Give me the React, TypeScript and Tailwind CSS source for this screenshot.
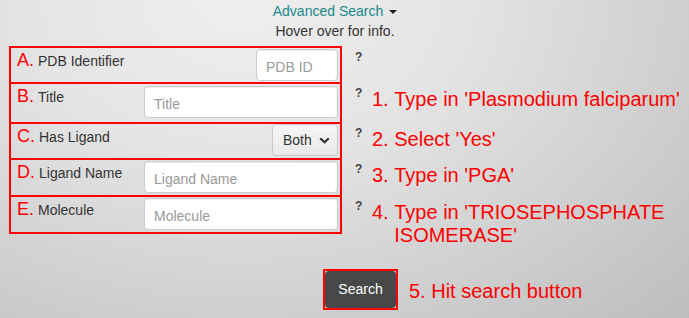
import React from "react";

const font = { fontFamily: '"Liberation Sans", Arial, Helvetica, sans-serif' };

function TextInput({ placeholder, w, mt }: { placeholder: string; w: string; mt: string }) {
  return (
    <input
      readOnly
      placeholder={placeholder}
      className={`${w} ${mt} h-[32px] shrink-0 rounded-[4px] border border-[#cccccc] bg-white pl-[9px] pr-[6px] pt-[4px] text-[14px] text-[#333] outline-none shadow-[inset_0_1px_1px_rgba(0,0,0,0.075)] placeholder:text-[#999999]`}
      style={font}
    />
  );
}

function Row({
  letter,
  label,
  h,
  last,
  control,
  help,
}: {
  letter: string;
  label: string;
  h: string;
  last?: boolean;
  control: React.ReactNode;
  help?: React.ReactNode;
}) {
  return (
    <div className={`flex ${h}`}>
      <div
        className={`flex w-[333px] shrink-0 justify-between border-x-2 border-t-2 border-[#ff0000] pl-[6px] pr-[2px] ${last ? "border-b-2" : ""}`}
      >
        <div className="pt-[1px] leading-[22px] whitespace-nowrap">
          <span className="text-[18px] text-[#ff0000]">{letter}</span>
          <span className="ml-[4px] text-[14px] text-[#333333]">{label}</span>
        </div>
        {control}
      </div>
      <div className="ml-[13px] flex flex-1 items-start">
        <span className="w-[17px] shrink-0 pt-[4px] text-[12px] font-bold leading-[14px] text-[#444444]">?</span>
        {help}
      </div>
    </div>
  );
}

function Help({ num, text }: { num: string; text: string }) {
  return (
    <div className="flex pt-[6px] text-[20px] leading-[23px] text-[#ff0000]">
      <span className="shrink-0 whitespace-pre">{num + " "}</span>
      <span>{text}</span>
    </div>
  );
}

export default function App() {
  return (
    <div
      className="h-[318px] w-[689px] overflow-hidden bg-[radial-gradient(ellipse_at_35%_0%,#efefef_0%,#e4e4e4_35%,#bdbdbd_100%)]"
      style={font}
    >
      <div className="w-[670px] pt-[1px] text-center text-[14px] leading-[20px]">
        <div className="text-[#1a8a8a]">
          Advanced Search
          <span className="ml-[6px] inline-block h-0 w-0 border-x-[4px] border-t-[4px] border-x-transparent border-t-[#222] align-middle" />
        </div>
        <div className="text-[#333333]">Hover over for info.</div>
      </div>

      <div className="ml-[9px] mt-[5px] flex flex-col">
        <Row
          letter="A."
          label="PDB Identifier"
          h="h-[36px]"
          control={<TextInput placeholder="PDB ID" w="w-[82px]" mt="mt-[1px]" />}
        />
        <Row
          letter="B."
          label="Title"
          h="h-[40px]"
          control={<TextInput placeholder="Title" w="w-[194px]" mt="mt-[2px]" />}
          help={<Help num="1." text="Type in 'Plasmodium falciparum'" />}
        />
        <Row
          letter="C."
          label="Has Ligand"
          h="h-[36px]"
          control={
            <div className="flex h-[32px] w-[66px] shrink-0 items-center rounded-[4px] border border-[#c8c8c8] bg-[linear-gradient(#f6f6f6,#e9e9e9)] pl-[10px] text-[14px] text-[#333333]">
              <span>Both</span>
              <svg width="11" height="7" viewBox="0 0 11 7" className="ml-[7px]">
                <polyline points="1.2,1.2 5.5,5.3 9.8,1.2" fill="none" stroke="#333" strokeWidth="2.2" />
              </svg>
            </div>
          }
          help={<Help num="2." text="Select 'Yes'" />}
        />
        <Row
          letter="D."
          label="Ligand Name"
          h="h-[37px]"
          control={<TextInput placeholder="Ligand Name" w="w-[194px]" mt="mt-[1px]" />}
          help={<Help num="3." text="Type in 'PGA'" />}
        />
        <Row
          letter="E."
          label="Molecule"
          h="h-[39px]"
          last
          control={<TextInput placeholder="Molecule" w="w-[194px]" mt="mt-[1px]" />}
          help={<Help num="4." text="Type in 'TRIOSEPHOSPHATE ISOMERASE'" />}
        />
      </div>

      <div className="ml-[323px] mt-[35px] flex items-start">
        <div className="h-[41px] w-[75px] shrink-0 border-2 border-[#ff0000]">
          <button className="h-full w-full rounded-[4px] bg-[#474948] text-[14px] text-white" style={font}>
            Search
          </button>
        </div>
        <div className="ml-[11px] pt-[11px] text-[20px] leading-[23px] text-[#ff0000]">5. Hit search button</div>
      </div>
    </div>
  );
}
